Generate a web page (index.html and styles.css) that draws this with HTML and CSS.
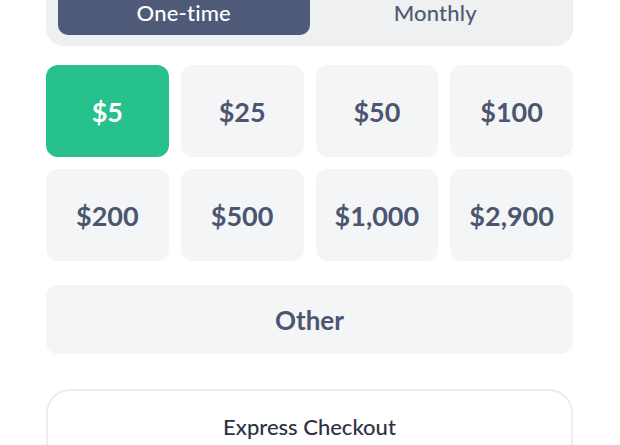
FILE: index.html
```html
<!DOCTYPE html>
<html>
<head>
<meta charset="utf-8">
<link rel="stylesheet" href="styles.css">
</head>
<body>
<div class="wrap">
  <div class="toggle">
    <div class="tab active">One-time</div>
    <div class="tab">Monthly</div>
  </div>
  <div class="amounts">
    <div class="amt selected">$5</div>
    <div class="amt">$25</div>
    <div class="amt">$50</div>
    <div class="amt">$100</div>
    <div class="amt">$200</div>
    <div class="amt">$500</div>
    <div class="amt">$1,000</div>
    <div class="amt">$2,900</div>
  </div>
  <div class="other">Other</div>
  <div class="express">
    <div class="express-title">Express Checkout</div>
  </div>
</div>
</body>
</html>
```
FILE: styles.css
```css
html, body {
  margin: 0;
  padding: 0;
  background: #ffffff;
  overflow: hidden;
}
body {
  font-family: "Lato", "Noto Sans", sans-serif;
}
.wrap {
  padding: 0 47px 0 46px;
}
.toggle {
  margin-top: -23px;
  background: #eef0f2;
  border-radius: 18px;
  padding: 12px 12px 11px 12px;
  display: flex;
}
.tab {
  flex: 1;
  height: 46px;
  display: flex;
  align-items: center;
  justify-content: center;
  font-size: 22px;
  font-weight: 500;
  letter-spacing: 0.2px;
  color: #4f5b70;
  border-radius: 10px;
}
.tab.active {
  background: #4e5a78;
  color: #ffffff;
}
.amounts {
  margin-top: 19px;
  display: grid;
  grid-template-columns: repeat(4, 1fr);
  grid-auto-rows: 92px;
  gap: 12px;
}
.amt {
  background: #f4f5f6;
  border-radius: 12px;
  display: flex;
  align-items: center;
  justify-content: center;
  font-size: 27px;
  font-weight: 700;
  color: #4b5670;
}
.amt.selected {
  background: #26c18c;
  color: #ffffff;
}
.other {
  margin-top: 24px;
  height: 69px;
  background: #f4f5f6;
  border-radius: 12px;
  display: flex;
  align-items: center;
  justify-content: center;
  font-size: 26px;
  font-weight: 700;
  color: #4b5670;
}
.express {
  margin-top: 35px;
  border: 2px solid #ededed;
  border-bottom: none;
  border-radius: 24px 24px 0 0;
  height: 56px;
  padding-top: 22px;
  box-sizing: border-box;
}
.express-title {
  text-align: center;
  font-size: 22px;
  font-weight: 500;
  color: #2d3340;
}
```
